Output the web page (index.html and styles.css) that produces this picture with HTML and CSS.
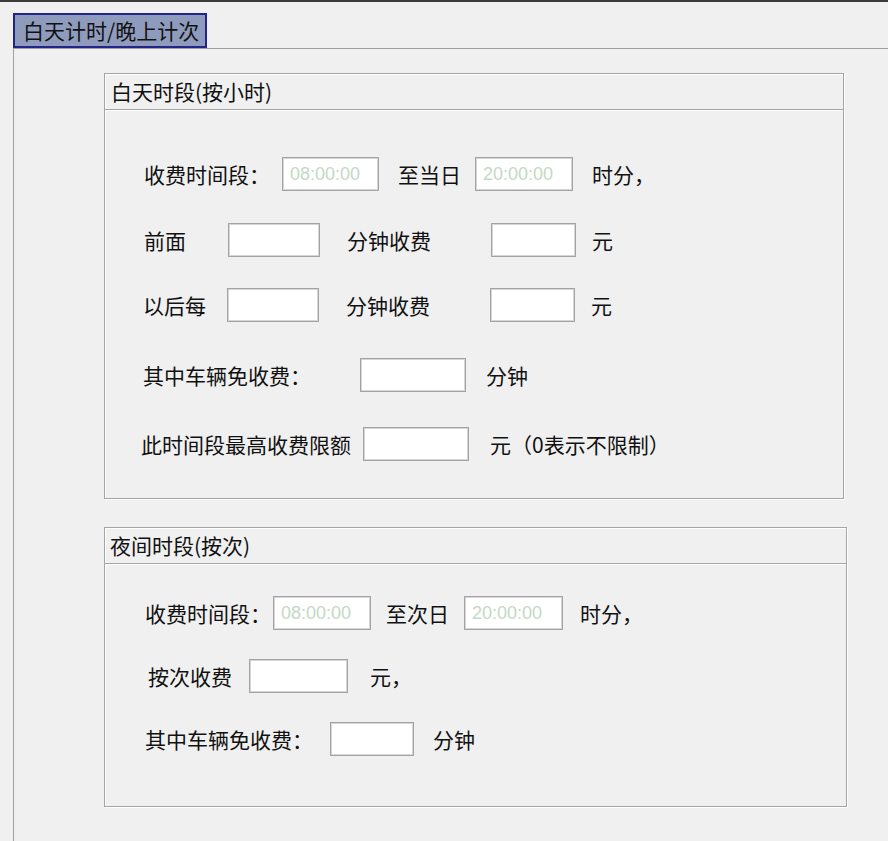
FILE: index.html
```html
<!DOCTYPE html>
<html lang="zh-CN">
<head>
<meta charset="utf-8">
<title>白天计时/晚上计次</title>
<link rel="stylesheet" href="styles.css">
</head>
<body>
<div class="page">
  <div class="topbar"></div>
  <div class="tab">白天计时/晚上计次</div>
  <div class="panel">
    <div class="group group-day">
      <div class="group-title">白天时段(按小时)</div>
      <div class="group-body">
        <div class="row day-r1">
          <span class="lbl w138">收费时间段：</span>
          <input class="box time w97" type="text" value="08:00:00">
          <span class="lbl w77 ml19">至当日</span>
          <input class="box time w98" type="text" value="20:00:00">
          <span class="lbl ml19">时分，</span>
        </div>
        <div class="row day-r2">
          <span class="lbl w84">前面</span>
          <input class="box w92" type="text">
          <span class="lbl w144 ml27">分钟收费</span>
          <input class="box w85" type="text">
          <span class="lbl ml16">元</span>
        </div>
        <div class="row day-r3">
          <span class="lbl w84 shift-l1">以后每</span>
          <input class="box w92" type="text">
          <span class="lbl w144 ml27">分钟收费</span>
          <input class="box w85" type="text">
          <span class="lbl ml16">元</span>
        </div>
        <div class="row day-r4">
          <span class="lbl w217 shift-l1">其中车辆免收费：</span>
          <input class="box w106" type="text">
          <span class="lbl ml20">分钟</span>
        </div>
        <div class="row day-r5">
          <span class="lbl w222 shift-l3">此时间段最高收费限额</span>
          <input class="box w106" type="text">
          <span class="lbl ml21">元（0表示不限制）</span>
        </div>
      </div>
    </div>

    <div class="group group-night">
      <div class="group-title">夜间时段(按次)</div>
      <div class="group-body">
        <div class="row night-r1">
          <span class="lbl w128">收费时间段：</span>
          <input class="box time w98" type="text" value="08:00:00">
          <span class="lbl w78 ml15">至次日</span>
          <input class="box time w99" type="text" value="20:00:00">
          <span class="lbl ml17">时分，</span>
        </div>
        <div class="row night-r2">
          <span class="lbl w101 shift-r3">按次收费</span>
          <input class="box w99" type="text">
          <span class="lbl ml22">元，</span>
        </div>
        <div class="row night-r3">
          <span class="lbl w185">其中车辆免收费：</span>
          <input class="box w84" type="text">
          <span class="lbl ml19">分钟</span>
        </div>
      </div>
    </div>
  </div>
</div>
</body>
</html>
```

FILE: styles.css
```css
* {
  box-sizing: border-box;
}

html, body {
  margin: 0;
  padding: 0;
  background: #f0f0f0;
  overflow: hidden;
}

body {
  font-family: "Noto Sans CJK SC", "Liberation Sans", sans-serif;
  font-size: 21px;
  color: #111;
}

.page {
  display: flex;
  flex-direction: column;
  height: 100vh;
}

.topbar {
  height: 2px;
  background: #3c3c3c;
  flex: none;
}

.tab {
  flex: none;
  margin-top: 11px;
  margin-left: 13px;
  width: 194px;
  height: 35px;
  background: #8e9bbd;
  border: 2px solid #23238a;
  padding-left: 8px;
  line-height: 31px;
  font-size: 21px;
  color: #111;
  white-space: nowrap;
}

.panel {
  flex: 1;
  margin-left: 13px;
  border-left: 1px solid #a0a0a0;
  border-top: 1px solid #a0a0a0;
  padding-top: 24px;
  padding-left: 90px;
}

.group {
  border: 1px solid #a4a4a4;
  box-shadow: 1px 1px 0 #ffffff, inset 1px 1px 0 #ffffff;
}

.group-day {
  width: 740px;
}

.group-night {
  width: 743px;
  margin-top: 28px;
}

.group-title {
  height: 36px;
  border-bottom: 1px solid #a4a4a4;
  box-shadow: 0 1px 0 #ffffff;
  padding-left: 6px;
  line-height: 35px;
  font-size: 21px;
  white-space: nowrap;
}

.group-night .group-title {
  padding-left: 5px;
}

.group-day .group-body {
  padding: 47px 0 37px 39px;
}

.group-night .group-body {
  padding: 32px 0 50px 40px;
}

.row {
  display: flex;
  align-items: center;
  height: 34px;
}

.day-r2 { margin-top: 32px; }
.day-r3 { margin-top: 31px; }
.day-r4 { margin-top: 36px; }
.day-r5 { margin-top: 35px; }

.night-r2 { margin-top: 29px; }
.night-r3 { margin-top: 29px; }

.lbl {
  flex: none;
  line-height: 1;
  white-space: nowrap;
}

.shift-l1 { margin-left: -1px; }
.shift-l3 { margin-left: -3px; }
.shift-r3 { margin-left: 3px; }

.box {
  flex: none;
  height: 34px;
  margin: 0;
  padding: 0 0 0 7px;
  background: #ffffff;
  border: 1px solid #a3a3a3;
  box-shadow: inset 0 0 0 1px #d6d6d6;
  border-radius: 0;
  font-family: "Liberation Sans", Arial, sans-serif;
  font-size: 18px;
  color: #111;
  outline: none;
}

.box.time {
  color: #c4d9c4;
}

.w77 { width: 77px; }
.w78 { width: 78px; }
.w84 { width: 84px; }
.w85 { width: 85px; }
.w92 { width: 92px; }
.w97 { width: 97px; }
.w98 { width: 98px; }
.w99 { width: 99px; }
.w101 { width: 101px; }
.w106 { width: 106px; }
.w128 { width: 128px; }
.w138 { width: 138px; }
.w144 { width: 144px; }
.w185 { width: 185px; }
.w217 { width: 217px; }
.w222 { width: 222px; }

.ml15 { margin-left: 15px; }
.ml16 { margin-left: 16px; }
.ml17 { margin-left: 17px; }
.ml19 { margin-left: 19px; }
.ml20 { margin-left: 20px; }
.ml21 { margin-left: 21px; }
.ml22 { margin-left: 22px; }
.ml27 { margin-left: 27px; }
```
